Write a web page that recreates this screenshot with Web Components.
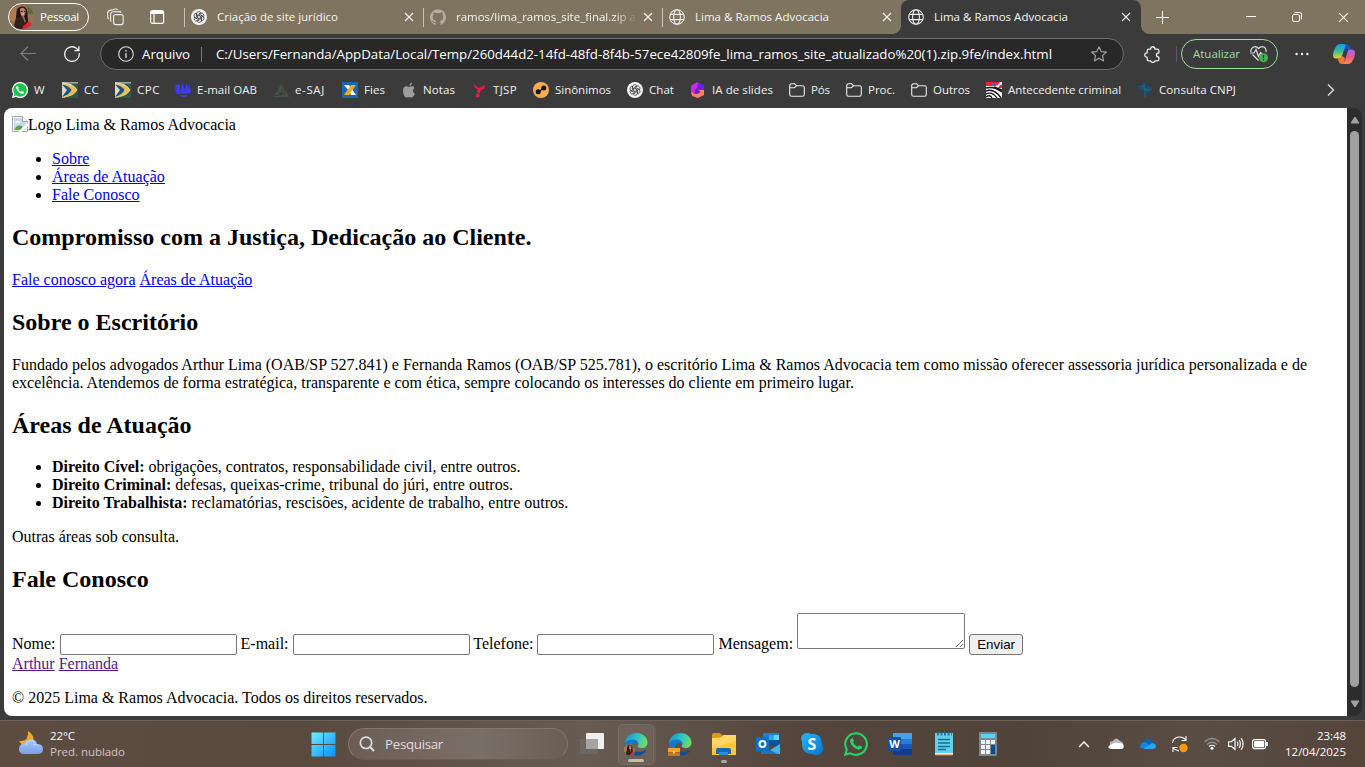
<!DOCTYPE html>
<html lang="pt-BR">
<head>
<meta charset="utf-8">
<title>Lima &amp; Ramos Advocacia</title>
<style>
html,body{margin:0;height:100%;overflow:hidden;background:#3b3b3b}
</style>
</head>
<body>
<desktop-screen></desktop-screen>
<script>
const globe='<g fill="none" stroke="#eee" stroke-width="1.1"><circle cx="8" cy="8" r="7.3"/><ellipse cx="8" cy="8" rx="3.4" ry="7.3"/><path d="M1.3 5.4h13.4M1.3 10.6h13.4"/></g>';
const gpt=c=>'<circle cx="8" cy="8" r="8" fill="#f4f4f4"/><g fill="none" stroke="'+c+'" stroke-width=".65">'+[0,60,120,180,240,300].map(a=>'<path transform="rotate('+a+' 8 8)" d="M5.6 6.6V4.6Q5.8 2.6 8 2.6Q9.3 2.7 10 3.8L6.6 5.8V9"/>').join('')+'</g>';
const edge='<path fill="url(#ea)" d="M1 12C1 5 6 1 12.500 1C19 1 23.500 5.500 23.500 10.500C23.500 14 21 16 17.500 16C14.500 16 13 14.800 14 13.300C15.500 11 13 8 9 8C5 8 2 10 1 12Z"/><path fill="#1477c8" d="M1 12C2 9 5 7.500 9 7.500C12.500 7.500 15 10 14 13C13 11 10 10 8.500 12.500C6.500 17 10 22 16 22.500C7 26 .500 20 1 12Z"/><path fill="#104e91" d="M8.500 13C7.500 18 13 21 18 19.500C20 19 21.800 17.800 22.200 18.200C20 22.500 16 24 12.500 23.500C6 22 6 16 8.500 13Z"/><defs><linearGradient id="ea" x1="0" x2="1" y1=".3" y2=".6"><stop stop-color="#1694cf"/><stop offset=".5" stop-color="#2cc3cb"/><stop offset="1" stop-color="#74e05a"/></linearGradient></defs>';
const face='<clipPath id="fc"><circle cx="12" cy="12" r="12"/></clipPath><g clip-path="url(#fc)"><path fill="#98704c" d="M0 0h24v24H0z"/><path fill="#5b6a42" d="M17 0h7v9h-6z"/><path fill="#b77b4a" d="M0 2h6v14H0z"/><path fill="#201716" d="M8 3C14-1 18 3 17.500 10L18 17L12 24H4C7 18 5 8 8 3Z"/><path fill="#bd7d62" d="M10 4Q13 1 15.500 5Q16 10 13 12Q10 11 10 4Z"/><path fill="#a96652" d="M11 11h3l2 6-5 3z"/><path fill="#33231f" d="M6 13l6-2 3 7-5 6H3z"/><path fill="#e22236" d="M13 21Q17 18 19 16L23 21 17 24h-5z"/><path d="M11 6.500h1.500M14 6.500h1" stroke="#3c1d18"/><path d="M11.500 9h2.500" stroke="#fff" stroke-width=".7"/></g>';
const book='<path fill="#2e5a45" d="M0 0h16v16H0z"/><path fill="#a6a6a0" d="M0 0h16v1.500H0z"/><path fill="#ddd9bd" d="M0 0L9 2Q14 5 15.500 8Q12 13 8 14L0 16Z"/><path fill="#f0bd49" d="M1 2Q10 2 15 8Q10 14 1 16Q8 11 8 8Q7 5 1 2Z"/><path fill="#1b5487" d="M0 2.500Q7 3.500 9.500 8Q7 13 0 15L5 8Z"/>';
const folder='<path fill="none" stroke="#ececec" stroke-width="1.100" d="M.7 4Q.7 1.800 2.600 1.800H5.700L7.500 3.800H13.500Q15.300 3.800 15.300 5.600V12.500Q15.300 14.300 13.500 14.300H2.600Q.7 14.300.7 12.500ZM.9 5.700H5.400L7.500 3.800"/>';
const wa='<path fill="#fff" d="M8 0A8 8 0 0 0 1.100 12L0 16L4.100 14.900A8 8 0 1 0 8 0Z"/><path fill="#18c449" d="M8 1.300A6.700 6.700 0 0 0 2.400 11.700L1.800 14.200L4.300 13.500A6.700 6.700 0 1 0 8 1.300Z"/><path fill="#fff" d="M5.300 4Q4 4.500 4.100 6Q5 9.700 8.700 11.500Q10.500 12.200 11.700 11.200Q12.300 10.100 11.800 9.700L10 8.900L9.200 9.900Q7 9 6.100 6.900L6.700 6L6 4.100Z"/>';
const I={
 face:[24,face],
 spaces:[18,'<g fill="none" stroke="#eee" stroke-width="1.100"><rect x="6.600" y="6.600" width="9.600" height="10" rx="2"/><path d="M4.300 13.600Q3.600 13 3.600 11.800V6.300Q3.800 4 6 3.800L12.300 3.600Q13.700 3.700 14.300 4.600M1.800 11Q.9 10.400.8 9.200L.6 5Q.8 3 2.800 2.400L8.600 1Q10 .8 10.900 1.700"/></g>'],
 tabs:[16,'<rect x="1.600" y="1.600" width="13" height="12.800" rx="2" fill="none" stroke="#fff" stroke-width="1.200"/><path fill="#fff" d="M1.600 2h13v3h-13z"/><path stroke="#fff" stroke-width="1.200" d="M5 4v10"/>'],
 gpt:[16,gpt('#222')],
 github:[16,'<path fill="#b5ada0" d="M8 .3A8 8 0 0 0 5.500 15.900V13.900C3.200 14.400 2.700 13 2.300 12.400L1.400 11.500C2.500 11.100 3 12 3.500 12.600C4.100 13.400 5 13.200 5.600 12.900C5.700 12.200 6 11.900 6.200 11.700C4 11.400 2.700 10.400 2.700 7.700Q2.700 6.400 3.600 5.500Q3.200 4.400 3.700 3.300Q4.800 3.200 6 4.200Q8 3.700 10 4.200Q11.200 3.200 12.300 3.300Q12.800 4.400 12.400 5.500Q13.300 6.400 13.300 7.700C13.300 10.400 12 11.400 9.800 11.700C10.400 12.200 10.500 12.800 10.500 15.900A8 8 0 0 0 8 .3Z"/>'],
 globe:[16,globe],
 x:[10,'<path stroke="#f2f2f2" stroke-width="1.150" d="M1 1l8 8M9 1L1 9"/>'],
 plus:[14,'<path stroke="#eee" stroke-width="1.200" d="M7 0v14M0 7h14"/>'],
 min:[10,'<path stroke="#fff" d="M0 4.500h10"/>'],
 restore:[10,'<g fill="none" stroke="#fff"><rect x=".5" y="2.500" width="7" height="7" rx="1.500"/><path d="M2.500.5H7.700Q9.500.5 9.500 2.300V7.500"/></g>'],
 back:[16,'<path fill="none" stroke="#7d7d7d" stroke-width="1.200" d="M16 7.500H1M8 .500L1 7.500L8 14.500"/>'],
 reload:[16,'<path fill="none" stroke="#f0f0f0" stroke-width="1.300" d="M15.200 7A7.300 7.300 0 1 1 12 2L14.700 4.500M14.900.3V4.700H10.500"/>'],
 info:[16,'<circle cx="8" cy="8" r="7.300" fill="none" stroke="#ddd" stroke-width="1.100"/><path stroke="#ddd" stroke-width="1.300" d="M8 7v5M8 4v1.500"/>'],
 star:[16,'<path fill="none" stroke="#a5a5a5" stroke-width="1.100" stroke-linejoin="round" d="M8 .8L10.200 5.600L15.400 6.100L11.500 9.700L12.600 15L8 12.300L3.400 15L4.500 9.700L.6 6.100L5.800 5.600Z"/>'],
 puzzle:[16,'<path fill="none" stroke="#eee" stroke-width="1.200" stroke-linejoin="round" d="M4.500 3H6.300Q6.200.7 8.200.7Q10.200.7 10.300 3H12.500Q14 3 14 4.500V6.500Q11.700 6.600 11.700 8.500Q11.700 10.400 14 10.500V12.500Q14 14 12.500 14H10.300Q10 15.500 8.300 15.500Q6.600 15.500 6.300 14H4.500Q3 14 3 12.500V10.500Q.7 10.500.7 8.500Q.7 6.500 3 6.500V4.500Q3 3 4.500 3Z"/>'],
 heart:[18,'<path fill="none" stroke="#ddd" stroke-width="1.200" d="M1 7C0 3 5-.5 8.500 3.500C12-.5 17 2.500 15.800 7M2.500 9.500L8.500 15.500M0 8H4L6 4.500L8.500 11.500L10.700 7.500L12 9.500"/><circle cx="13.500" cy="12.800" r="4.500" fill="#4cae51"/><path stroke="#173b19" stroke-width="1.200" d="M13.500 10v3.300M13.500 14.200v1.200"/>'],
 dots:[14,'<g fill="#eee"><circle cx="1.600" cy="7" r="1.200"/><circle cx="7" cy="7" r="1.200"/><circle cx="12.400" cy="7" r="1.200"/></g>'],
 copilot:[22,'<defs><linearGradient id="ca" x2="0" y2="1"><stop stop-color="#1599e8"/><stop offset=".5" stop-color="#37bd94"/><stop offset="1" stop-color="#f5cf24"/></linearGradient><linearGradient id="cb" x2="0" y2="1"><stop stop-color="#a66cf2"/><stop offset=".5" stop-color="#e85795"/><stop offset="1" stop-color="#ff8b46"/></linearGradient></defs><path fill="#1556c5" d="M10 1H13Q16 1 17.500 6H13L11 9Z"/><path fill="url(#ca)" d="M7 1H11Q13 1 12 4L9 13Q8 15.500 6 15.500H3Q0 15.500 0 12Q0 8 3 3.500Q4.500 1 7 1Z"/><path fill="#f5793b" d="M4.500 15.500H6Q8 15.500 9 13L12 15L11 21H9Q6 21 4.500 15.500Z"/><path fill="url(#cb)" d="M16 6.500H18.500Q22 6.500 22 10Q22 14 19.500 18Q18 21 15 21H9.500Q11.200 20 12 17.500L14.500 9Q15 6.500 16 6.500Z"/>'],
 wa:[16,wa],book:[16,book],folder:[16,folder],
 oab:[16,'<g fill="#3c3bf5"><path d="M.5 3Q3 1.500 5 3V12H3Q.5 12 .5 8ZM5.300 8L7.800 1L9.500 7V12H5.300ZM9.500 10L11.500 1L13 6L14 2L16 10Q14 12 9.500 12ZM4.500 13H12V14.200H10V15H6.500V14.200H4.500Z"/></g>'],
 esaj:[16,'<path fill="#455046" d="M8 1L10 5L6 6ZM5 6L10 5L12 9L4 10ZM3 10L13 9L16 15H0Z"/><path stroke="#333" d="M4 9l5 4M10 7l-3 7M1 14l12-3" stroke-width=".7"/>'],
 fies:[16,'<path fill="#1d67ae" d="M0 0h16v16H0z"/><path fill="#fff" d="M2 3H7L10 7L14 13H9L7 9Z"/><path fill="#f6a829" d="M9 3H14L7 13H2Z"/>'],
 apple:[16,'<path fill="#9c9c9c" d="M8.300 4Q8.500 1.200 11 0.400Q11.300 3.200 8.300 4ZM8 5C9.500 4.400 12 3.500 13.500 6Q11.300 7.500 12.100 9.700Q12.600 11 14 11.500Q12 16 10 15.500Q8 14.600 6 15.500C4 16 2 12 2 9C2 4.500 5 3.500 8 5Z"/>'],
 tjsp:[16,'<path fill="#eb174d" d="M2.500 2L8 6Q10 5 14 3L13.500 6.500L9.500 8.500L9 11.500L5.500 10L7 7.500L4 6Z"/><circle cx="6.700" cy="13.500" r="2" fill="#eb174d"/>'],
 sin:[16,'<circle cx="8" cy="8" r="8" fill="#faad50"/><path stroke="#111" stroke-width="1.500" d="M5.500 10L10.500 6"/><g fill="#111"><circle cx="5.200" cy="9.800" r="2.500"/><circle cx="10.800" cy="6.100" r="2.500"/></g>'],
 ia:[16,'<path fill="#d12bdf" d="M7 0L14 4L9 6L5 8V12L1 11V4Z"/><path fill="#5d28ef" d="M8 1L14 3V8H10L5 9L7 6Z"/><path fill="#ff805c" d="M1 10L5 12L10 11L8 8H14V13L8 16L2 14Z"/><path fill="#6a22c8" d="M5.500 7L10 5L12 5.500L8 8L11 9.500L7 12L5 10Z" opacity=".7"/>'],
 crime:[16,'<path fill="#fff" d="M0 0h16v16H0z"/><path fill="#ef2233" d="M0 0H14Q12 5 5 4H0ZM14 3h2v3h-4z"/><path fill="#4168b7" d="M6 1h4v3H6z"/><path fill="none" stroke="#111" stroke-width="1.400" d="M0 6Q8 4 16 10M0 9Q8 6 15 16M0 12Q6 9 11 16M0 15Q4 12 6 16M8 5L16 8"/>'],
 cnpj:[16,'<path fill="#1e4b6c" d="M1 4L5 3L7 0L9 3L16 5L14 10L9 12L8 16L6 12L7 9L3 8L0 6Z"/><path fill="none" stroke="#2878a0" stroke-width=".4" d="M2 5L7 4L9 9L14 7M7 1L8 15M4 4L10 8L12 5"/>'],
 chev:[12,'<path fill="none" stroke="#ddd" stroke-width="1.400" d="M3 .500L8.500 6L3 11.500"/>'],
 broken:[16,'<path fill="#fff" stroke="#a5a5a5" d="M.5.5H10.500L15.500 5.500V15.500H.5Z"/><path fill="#c6d8f5" d="M2 2H10V6H14V14H2Z"/><path fill="#fff" stroke="#a5a5a5" d="M10.500.5V5.500H15.500"/><path fill="#fff" d="M3 7q1-3 3-2q3 0 2 2z"/><path fill="#57a73c" d="M2 14Q6 7 11 11L8 14Z"/><path stroke="#fff" stroke-width="2.500" d="M7 17L16 8"/>'],
 weather:[24,'<defs><linearGradient id="wc" x2="0" y2="1"><stop stop-color="#a7cdfa"/><stop offset="1" stop-color="#7b9fe7"/></linearGradient></defs><path fill="#f5a62b" d="M9 0Q18 6 12 14H3L0 10Q10 11 9 0Z"/><path fill="url(#wc)" d="M6 12Q8 8 12 8.500Q17 8 18 13Q24 13 24 18Q24 23 19 23H5Q0 23 0 18Q0 13 6 12Z"/><path fill="none" stroke="#bfdbff" d="M7 14Q9 9 14 10M14 14q3-2 5 1"/>'],
 win:[24,'<defs><linearGradient id="wg" x2="1" y2="1"><stop stop-color="#72edff"/><stop offset="1" stop-color="#078ff5"/></linearGradient></defs><path fill="url(#wg)" d="M.5.500H11.600V11.600H.5ZM12.400.500H23.500V11.600H12.400ZM.5 12.400H11.600V23.500H.5ZM12.400 12.400H23.500V23.500H12.400Z"/>'],
 search:[16,'<circle cx="7" cy="6.800" r="5.700" fill="none" stroke="#e1dedc" stroke-width="1.700"/><path stroke="#e1dedc" stroke-width="2" d="M11 11L15 15"/>'],
 task:[24,'<rect x="6" y="1" width="18" height="16" rx="1" fill="#efefef"/><rect y="7" width="18" height="15" rx="1" fill="#6a6764"/><path fill="#a6a4a2" d="M6 7H18V17H6Z"/>'],
 edgeface:[24,edge+'<g transform="translate(0 12) scale(.48)">'+face+'</g>'],
 edgework:[24,edge+'<path fill="#ce741b" d="M0 17H12V24H0Z"/><path fill="#f3a22b" d="M0 16H12V20H0Z"/><path fill="#b56516" d="M0 20H12V21H0Z"/><path fill="#ffe47a" d="M5 19h2v2.500H5z"/>'],
 files:[24,'<path fill="#d89a12" d="M0 3Q0 1 2 1H8L10 3V8H0Z"/><path fill="#ffd764" d="M0 6L9 5.500L11 3H24V23H0Z"/><path fill="#fbc739" d="M0 16L24 9V23H0Z"/><path fill="#1169b9" d="M4 22V18Q4 16 6 16H17Q19 16 19 18V22Z"/><path fill="#318fda" d="M7 20h9v3H7z"/>'],
 outlook:[24,'<path fill="#1682d6" d="M7 1H23V14H7Z"/><path fill="#2ba8ee" d="M13 3H18V8H13Z"/><path fill="#65d3fc" d="M18 3H23V8H18Z"/><path fill="#0d529c" d="M13 8H23V14H13Z"/><path fill="#1a75c8" d="M5 13L14 19L24 12V22H5Z"/><path fill="#3bb7f5" d="M24 12V22H22L14 18Z"/><rect y="5" width="13" height="14" rx="1" fill="#0870c8"/><circle cx="6.500" cy="12" r="3" fill="none" stroke="#fff" stroke-width="2"/>'],
 skype:[24,'<defs><linearGradient id="sk" x2="1" y2="1"><stop stop-color="#2bb4f4"/><stop offset="1" stop-color="#0078d4"/></linearGradient></defs><path fill="url(#sk)" d="M7 1Q9 1 11 2Q22 1 22 13Q25 19 20 22Q16 24 13 22Q1 22 2 10Q-1 2 7 1Z"/><text x="12" y="17.500" text-anchor="middle" fill="#fff" font-family="Open Sans" font-size="16" font-weight="700">S</text>'],
 wagreen:[24,'<path fill="none" stroke="#25d366" stroke-width="2.100" d="M12 1.200A10.800 10.800 0 0 0 2.800 17.500L1.300 22.600L6.500 21.300A10.800 10.800 0 1 0 12 1.200Z"/><path fill="#25d366" d="M8 6Q6 7 6 9Q7 14.500 13 17.200Q16 18.300 17.700 16.500Q18.500 15 17.700 14.500L15 13.200L13.800 14.800Q10.300 13.300 9 10.300L10 9L8.900 6.200Z"/>'],
 word:[24,'<path fill="#40a3ed" d="M5 1H24V7H5Z"/><path fill="#2a7bd4" d="M5 7H24V12H5Z"/><path fill="#1858bb" d="M5 12H24V17H5Z"/><path fill="#123c85" d="M5 17H24V23H5Z"/><rect y="5" width="13" height="14" rx="1" fill="#164da5"/><text x="6.500" y="16" text-anchor="middle" fill="#fff" font-family="Open Sans" font-size="11" font-weight="700">W</text>'],
 note:[24,'<path fill="#fff" d="M3 21h18v3H3z"/><path fill="#b85b1d" d="M3 22.500h18V24H3z"/><path fill="#5ed0ea" d="M3 1H21V21H3Z"/><path stroke="#197f9e" stroke-width="3" stroke-dasharray="2 1.500" d="M5 2H20"/><path stroke="#176b8b" stroke-width="1.300" d="M6 7.500H18M6 11H18M6 14.500H18M6 17.500H14"/>'],
 calc:[24,'<rect x="3" y="0" width="18" height="24" rx="1" fill="#7c8790"/><path fill="#4fd7fa" d="M5 2H19V6H5Z"/><g fill="#f1f3f4"><path d="M5 8h4v4H5zM10 8h4v4h-4zM15 8h4v4h-4zM5 13h4v4H5zM10 13h4v4h-4zM5 18h4v4H5zM10 18h4v4h-4z"/></g><path fill="#0f4a8b" d="M15 13h4v9h-4z"/>'],
 up:[12,'<path fill="none" stroke="#fff" stroke-width="1.500" d="M1 9L6 4L11 9"/>'],
 cloud:[16,'<path fill="#bcb8b4" d="M2 8Q1 5 5 5Q8 0 12 5Q16 6 15 10H2Z"/><path fill="#fff" d="M2 9Q8 5 15 8Q17 13 13 13H3Q-2 12 2 9Z"/>'],
 onedrive:[16,'<path fill="#0962b5" d="M2 8Q1 5 5 5Q8 0 12 5Q16 6 15 10H2Z"/><path fill="#1686dc" d="M0 10Q1 6 5 6L13 12H3Q0 13 0 10Z"/><path fill="#2ba4ef" d="M3 13Q9 9 12 7Q17 8 16 11Q15 13 13 13Z"/>'],
 sync:[18,'<path fill="none" stroke="#fff" stroke-width="1.100" d="M1.500 8Q2 3 7.500 2Q12 1.500 15 5M15 1V5.500H10.500M2 17V12.500H6.500M2 12.500Q4 15.500 8 16"/><circle cx="12.500" cy="13" r="4.200" fill="#ff980b"/>'],
 wifi:[16,'<g fill="none"><path stroke="#98918c" stroke-width="1.200" d="M.5 6Q8-1 15.500 6M3 8.500Q8 4 13 8.500"/><path stroke="#fff" stroke-width="1.200" d="M5 10.500Q8 8 11 10.500"/></g><circle cx="8" cy="12.200" r="1.500" fill="#fff"/>'],
 vol:[16,'<g fill="none" stroke="#fff" stroke-width="1.150"><path d="M.6 5.700H3.500L7 2.500V13.500L3.500 10.300H.6ZM9.200 5.700Q10.500 8 9.200 10.300M11.200 4Q13.500 8 11.200 12M13.200 2.300Q17 8 13.200 13.700"/></g>'],
 bat:[16,'<rect x=".6" y="3.600" width="13" height="9" rx="2" fill="none" stroke="#fff" stroke-width="1.100"/><rect x="2" y="5" width="10.200" height="6.200" rx=".8" fill="#fff"/><path fill="#fff" d="M14 6h2v4h-2z"/>'],
 tup:[10,'<path fill="#a2a2a2" stroke="#a2a2a2" stroke-linejoin="round" d="M5 2L9 8H1Z"/>'],
 tdown:[10,'<path fill="#a2a2a2" stroke="#a2a2a2" stroke-linejoin="round" d="M1 2H9L5 8Z"/>']
};
const UI='font:11.5px "Open Sans","Noto Sans",sans-serif;';
const def=(name,css,html)=>customElements.define(name,class extends HTMLElement{
  constructor(){super();this.attachShadow({mode:'open'}).innerHTML='<style>*{box-sizing:border-box}'+css+'</style>'+(typeof html==='function'?html(this):html);}
});
const ic=(n,s)=>'<ui-icon name="'+n+'" size="'+(s||16)+'"></ui-icon>';

def('ui-icon',':host{display:block;flex:none;line-height:0}svg{display:block}',el=>{
  const i=I[el.getAttribute('name')],s=el.getAttribute('size');
  return '<svg width="'+s+'" height="'+s+'" viewBox="0 0 '+i[0]+' '+i[0]+'">'+i[1]+'</svg>';
});

def('browser-tab',`:host{display:flex;align-items:center;width:239px;height:34px;padding-left:7px;flex:none;box-sizing:border-box;position:relative;${UI}color:#f5f5f5}
 :host([sep]){border-left:1px solid transparent;padding-left:6px;background:linear-gradient(#cbc5b9,#cbc5b9) 0 8px/1px 19px no-repeat border-box}
 :host([active]){width:240px;background:#3b3b3b;border-radius:8px 8px 0 0}
 :host([active])::before,:host([active])::after{content:"";position:absolute;bottom:0;width:8px;height:8px}
 :host([active])::before{left:-8px;background:radial-gradient(circle at 0 0,transparent 7.5px,#3b3b3b 8px)}
 :host([active])::after{right:-8px;background:radial-gradient(circle at 100% 0,transparent 7.5px,#3b3b3b 8px)}
 .t{margin-left:10px;width:180px;white-space:nowrap;overflow:hidden}
 :host([fade]) .t{-webkit-mask-image:linear-gradient(90deg,#000 158px,transparent 182px)}
 .c{margin-left:6.5px}`,
 el=>ic(el.getAttribute('icon'))+'<div class="t"><slot></slot></div><div class="c">'+ic('x',10)+'</div>');

def('tab-strip',`:host{display:flex;height:34px;background:#7f745f;align-items:center;${UI}color:#fff}
 .profile{margin-left:8px;width:81px;height:28px;border:1px solid #fff;border-radius:14px;display:flex;align-items:center;padding-left:1px;gap:6px;flex:none}
 .a{margin-left:18px}.b{margin:0 19px 0 24px}.p{margin-left:15px}.m{margin-left:77px}.r{margin-left:36px}.k{margin-left:36px}`,
 `<div class="profile">${ic('face',24)}<fit-text w="39">Pessoal</fit-text></div><div class="a">${ic('spaces',18)}</div><div class="b">${ic('tabs')}</div>
 <browser-tab sep icon="gpt"><fit-text w="121">Criação de site jurídico</fit-text></browser-tab>
 <browser-tab sep fade icon="github"><fit-text w="184">ramos/lima_ramos_site_final.zip at</fit-text></browser-tab>
 <browser-tab sep icon="globe"><fit-text w="134">Lima &amp; Ramos Advocacia</fit-text></browser-tab>
 <browser-tab active icon="globe"><fit-text w="134">Lima &amp; Ramos Advocacia</fit-text></browser-tab>
 <div class="p">${ic('plus',13)}</div><div class="m">${ic('min',10)}</div><div class="r">${ic('restore',10)}</div><div class="k">${ic('x',11)}</div>`);

def('address-bar',`:host{display:flex;align-items:center;height:32px;width:1024px;box-sizing:border-box;border:1px solid #6e6e6e;border-radius:16px;background:#282828;color:#fff;font:13.3px "Open Sans","Noto Sans",sans-serif;padding-left:17px;flex:none}
 .l{margin-left:8px}fit-text{padding-bottom:0}.s{width:1px;height:15px;background:#777;margin:0 14px 0 11px}.st{margin-left:39px}`,
 `${ic('info')}<fit-text class="l" w="48">Arquivo</fit-text><div class="s"></div><fit-text w="836">C:/Users/Fernanda/AppData/Local/Temp/260d44d2-14fd-48fd-8f4b-57ece42809fe_lima_ramos_site_atualizado%20(1).zip.9fe/index.html</fit-text><div class="st">${ic('star')}</div>`);

def('browser-toolbar',`:host{display:flex;align-items:center;height:40px;${UI}}
 .b{margin-left:20px}.r{margin:0 20px 0 28px}.e{margin:0 15px 0 20px}.s{width:1px;height:16px;background:#5c5c5c}
 .u{display:flex;align-items:center;width:97px;height:30px;border:1px solid #a0dca0;border-radius:15px;color:#a0dca0;padding-left:11px;gap:10px;margin:0 17px 0 4px;flex:none}.c{margin-left:24px}`,
 `<div class="b">${ic('back')}</div><div class="r">${ic('reload')}</div><address-bar></address-bar><div class="e">${ic('puzzle',17)}</div><div class="s"></div>
 <div class="u"><fit-text w="47">Atualizar</fit-text>${ic('heart',18)}</div>${ic('dots',14)}<div class="c">${ic('copilot',22)}</div>`);

def('book-mark',':host{display:flex;align-items:center;flex:none;gap:6px}',el=>ic(el.getAttribute('icon'))+'<slot></slot>');
const marks=[['wa','W',11,50],['book','CC',15,53],['book','CPC',23,60],['oab','E-mail OAB',60,98],['esaj','e-SAJ',30,69],['fies','Fies',21,59],['apple','Notas',32,70],['tjsp','TJSP',24,62],['sin','Sinônimos',56,94],['gpt','Chat',25,63],['ia','IA de slides',61,99],['folder','Pós',19,57],['folder','Proc.',27,65],['folder','Outros',37,75],['crime','Antecedente criminal',113,151],['cnpj','Consulta CNPJ',77,188]];
def('bookmark-bar',`:host{display:flex;align-items:center;height:34px;box-sizing:border-box;padding:0 0 2px 12px;${UI}color:#f0f0f0}`,
 marks.map(m=>`<book-mark icon="${m[0]}" style="width:${m[3]}px"><fit-text w="${m[2]}">${m[1]}</fit-text></book-mark>`).join('')+ic('chev',12));

def('contact-form',`:host{display:block}form{margin:0}input{width:177px;height:21px;border:1px solid #767676;border-radius:2px;background:#fff;padding:1px 2px;font:13.333px "Liberation Sans",Arial,sans-serif}
 textarea{width:168px;height:36px;border:1px solid #767676;border-radius:2px;padding:2px;font:13.333px "Liberation Mono",monospace}button{width:54px;height:21px;padding:0;border:1px solid #767676;border-radius:3px;background:#efefef;color:#000;font:13.333px "Liberation Sans",Arial,sans-serif}`,
 `<form onsubmit="return false"><label>Nome:</label> <input> <label>E-mail:</label> <input> <label>Telefone:</label> <input> <label>Mensagem:</label> <textarea></textarea> <button>Enviar</button></form>`);

def('site-page',`:host{display:block;width:1343px;height:608px;box-sizing:border-box;background:#fff;color:#000;border-radius:8px 0 0 8px;padding:8px;overflow:hidden;font:16px "Liberation Serif","Times New Roman",serif;flex:none}
 a{color:#0000ee;text-decoration:underline}a.v{color:#551a8b}h2{font-size:24px;margin:19.92px 0}ul{margin:16px 0;padding-left:40px}p{margin:16px 0}.logo{display:flex;height:18px}`,
 `<header><div class="logo">${ic('broken')}<span>Logo Lima &amp; Ramos Advocacia</span></div><ul><li><a href="#sobre">Sobre</a></li><li><a href="#areas">Áreas de Atuação</a></li><li><a href="#contato">Fale Conosco</a></li></ul></header>
 <section><h2>Compromisso com a Justiça, Dedicação ao Cliente.</h2><a href="#contato">Fale conosco agora</a> <a href="#areas">Áreas de Atuação</a></section>
 <section><h2>Sobre o Escritório</h2><p>Fundado pelos advogados Arthur Lima (OAB/SP 527.841) e Fernanda Ramos (OAB/SP 525.781), o escritório Lima &amp; Ramos Advocacia tem como missão oferecer assessoria jurídica personalizada e de excelência. Atendemos de forma estratégica, transparente e com ética, sempre colocando os interesses do cliente em primeiro lugar.</p></section>
 <section><h2>Áreas de Atuação</h2><ul><li><b>Direito Cível:</b> obrigações, contratos, responsabilidade civil, entre outros.</li><li><b>Direito Criminal:</b> defesas, queixas-crime, tribunal do júri, entre outros.</li><li><b>Direito Trabalhista:</b> reclamatórias, rescisões, acidente de trabalho, entre outros.</li></ul><p>Outras áreas sob consulta.</p></section>
 <section><h2>Fale Conosco</h2><contact-form></contact-form></section>
 <footer><a class="v" href="#a">Arthur</a> <a class="v" href="#f">Fernanda</a><p>© 2025 Lima &amp; Ramos Advocacia. Todos os direitos reservados.</p></footer>`);

def('scroll-bar',':host{display:flex;flex-direction:column;align-items:center;box-sizing:border-box;width:15px;height:608px;background:#2c2c2c;border-radius:0 8px 8px 0;padding:7px 0 6px;flex:none}.t{width:9px;height:556px;border-radius:5px;background:#9f9f9f;margin:6px 0 12px}',
 ic('tup',10)+'<div class="t"></div>'+ic('tdown',10));

def('app-button',`:host{display:flex;flex-direction:column;align-items:center;box-sizing:border-box;width:44px;height:46px;padding-top:11px;flex:none}
 :host([active]){width:36px;height:41px;margin:3px 4px 0;padding-top:7px;background:#ffffff12;border:1px solid #ffffff12;border-radius:5px;box-shadow:3px 0 0 -1px #ffffff10}
 i{height:3px;margin-top:3px;border-radius:2px}:host([active]) i{width:16px;background:#c9bda1}:host([open]) i{width:6px;margin-top:4px;background:#aaa5a0}`,
 el=>ic(el.getAttribute('icon'),24)+'<i></i>');

def('search-box',`:host{display:flex;align-items:center;box-sizing:border-box;width:220px;height:32px;border-radius:16px;background:linear-gradient(90deg,#6b5d54,#7a6f67 60%,#6b5e54);border:1px solid #82776e;border-bottom-color:#6a5d53;color:#e2ddd9;font:13.3px "Open Sans","Noto Sans",sans-serif;padding-left:10px;gap:10px;margin:7px 2px 0 12px;flex:none}fit-text{padding-bottom:0}`,
 ic('search')+'<fit-text w="58">Pesquisar</fit-text>');

def('task-bar',`:host{display:flex;height:47px;box-sizing:border-box;border-top:1px solid #6b625b;background:linear-gradient(90deg,#5c4c41,#594a40 22%,#675b52 43%,#54463d 58%,#50433a 75%,#594d44 88%,#54453b);${UI}color:#fff}
 .w{display:flex;gap:7px;padding:10px 0 0 19px;width:311px;flex:none}.w div,.clock{display:flex;flex-direction:column}.w fit-text,.clock fit-text{line-height:16px;height:16px}.w div{margin-top:-3px}.w div :last-child{color:#cec7c2}
 .start{margin-top:11px}.tray{display:flex;align-items:center;height:46px;margin-left:68px;width:191px;flex:none}.clock{align-items:flex-end;padding-top:7px;width:77px;flex:none}`,
 `<div class="w">${ic('weather',24)}<div><fit-text w="25">22°C</fit-text><fit-text w="75">Pred. nublado</fit-text></div></div><div class="start">${ic('win',25)}</div><search-box></search-box>
 <app-button icon="task"></app-button><app-button active icon="edgeface"></app-button><app-button icon="edgework"></app-button><app-button open icon="files"></app-button><app-button icon="outlook"></app-button><app-button icon="skype"></app-button><app-button icon="wagreen"></app-button><app-button icon="word"></app-button><app-button icon="note"></app-button><app-button icon="calc"></app-button>
 <div class="tray">${ic('up',12)}<span style="width:18px"></span>${ic('cloud')}<span style="width:16px"></span>${ic('onedrive')}<span style="width:15px"></span>${ic('sync',18)}<span style="width:15px"></span>${ic('wifi')}<span style="width:8px"></span>${ic('vol')}<span style="width:8px"></span>${ic('bat')}</div>
 <div class="clock"><fit-text w="29">23:48</fit-text><fit-text w="61">12/04/2025</fit-text></div>`);

def('desktop-screen',':host{display:flex;flex-direction:column;width:1365px;height:767px;background:#3b3b3b;overflow:hidden}.v{display:flex;padding-left:4px;height:612px;flex:none}',
 '<tab-strip></tab-strip><browser-toolbar></browser-toolbar><bookmark-bar></bookmark-bar><div class="v"><site-page></site-page><scroll-bar></scroll-bar></div><task-bar></task-bar>');

/* Label that spreads its letters so that the line takes the width given in "w". */
customElements.define('fit-text',class extends HTMLElement{
  constructor(){super();this.attachShadow({mode:'open'}).innerHTML='<style>:host{display:block;flex:none;white-space:nowrap;padding-bottom:2px}span{display:inline-block}</style><span><slot></slot></span>';}
  connectedCallback(){
    const s=this.shadowRoot.querySelector('span'),w=+this.getAttribute('w'),n=[...this.textContent].length;
    this.style.width=w+'px';
    s.style.letterSpacing=(w-s.getBoundingClientRect().width)/n+'px';
  }
});
</script>
</body>
</html>
